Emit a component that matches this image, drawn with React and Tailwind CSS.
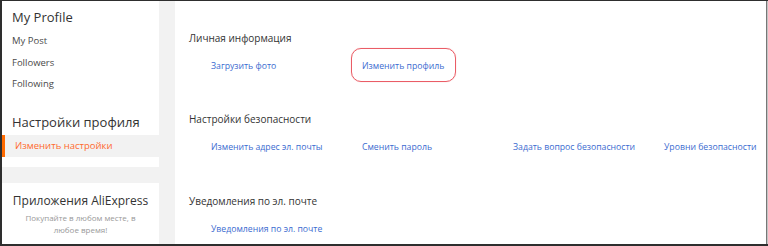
const font = { fontFamily: '"Open Sans", "Noto Sans", sans-serif' };

const sections = [
  { title: 'Личная информация', links: ['Загрузить фото', 'Изменить профиль'], mark: 1, gap: 'mt-0' },
  {
    title: 'Настройки безопасности',
    links: ['Изменить адрес эл. почты', 'Сменить пароль', 'Задать вопрос безопасности', 'Уровни безопасности'],
    gap: 'mt-[38px]',
  },
  { title: 'Уведомления по эл. почте', links: ['Уведомления по эл. почте'], gap: 'mt-[39px]' },
];

function Sidebar() {
  return (
    <div className="w-[157px] shrink-0 flex flex-col">
      <div className="bg-white h-[166px] pt-[6px]">
        <div className="px-[10px] text-[13px] leading-[20px] text-[#333]">My Profile</div>
        <ul className="mt-[3px] px-[10px] text-[9.5px] text-[#4a4a4a]">
          <li className="h-[21.5px] leading-[21.5px]">My Post</li>
          <li className="h-[21.5px] leading-[21.5px]">Followers</li>
          <li className="h-[21.5px] leading-[21.5px]">Following</li>
        </ul>
        <div className="mt-[17px] px-[10px] text-[13px] leading-[20px] text-[#333] whitespace-nowrap">Настройки профиля</div>
        <div className="mt-[3px] h-[22px] bg-[#f2f2f2] border-l-[3px] border-[#ff6a00] pl-[10px] text-[9.5px] leading-[22px] text-[#ff6a2e]">
          Изменить настройки
        </div>
      </div>
      <div className="mt-[16px] flex-1 bg-white pt-[10px] text-center">
        <div className="text-[12px] leading-[16px] text-[#333] whitespace-nowrap">Приложения AliExpress</div>
        <p className="mt-[3px] text-[8px] leading-[11.5px] text-[#999]">
          Покупайте в любом месте, в
          <br />
          любое время!
        </p>
      </div>
    </div>
  );
}

function Main() {
  return (
    <div className="flex-1 min-w-0 ml-[16px] bg-white pt-[29px] pl-[14px]">
      {sections.map((s) => (
        <section key={s.title} className={s.gap}>
          <h3 className="text-[10px] leading-[16px] text-[#333]">{s.title}</h3>
          <div className="mt-[13px] pl-[22px] grid grid-cols-[151px_151px_151px_151px] text-[8.7px] leading-[14px] text-[#3b6bd0]">
            {s.links.map((l, i) => (
              <span key={l} className="whitespace-nowrap">
                {s.mark === i ? (
                  <span className="relative">
                    {l}
                    <span className="absolute -left-[11px] -right-[12px] -top-[12px] -bottom-[10px] rounded-[10px] border border-[#ea5d66] shadow-[0_0_1px_#f3a0a5]" />
                  </span>
                ) : (
                  l
                )}
              </span>
            ))}
          </div>
        </section>
      ))}
    </div>
  );
}

export default function App() {
  return (
    <div
      style={font}
      className="w-[768px] h-[246px] flex bg-[#f2f2f2] border-t border-l-2 border-b-2 border-[#2e2e2e] overflow-hidden"
    >
      <Sidebar />
      <Main />
      <div className="w-px shrink-0 bg-[#777]" />
      <div className="w-px shrink-0 bg-[#c4c4c4]" />
    </div>
  );
}
